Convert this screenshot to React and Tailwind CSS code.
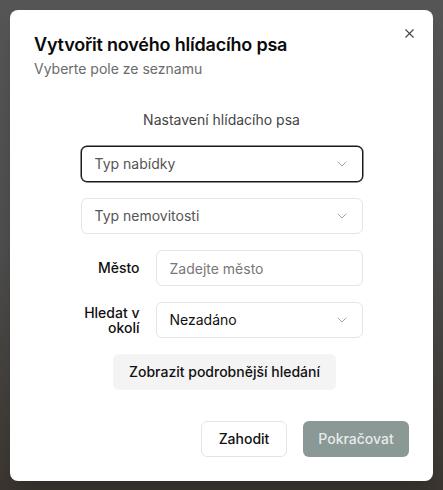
import { ChevronDown, X } from 'lucide-react';

function Select({ label, value, focused }) {
  return (
    <button
      type="button"
      className={`flex h-9 w-full items-center justify-between rounded-md border bg-white pl-[13px] pr-3 text-sm ${
        focused ? 'border-[#1a1a1a] shadow-[0_0_0_0.5px_#1a1a1a]' : 'border-[#e4e4e7]'
      }`}
    >
      <span className={value ? 'text-[#111]' : 'text-[#555]'}>{value || label}</span>
      <ChevronDown size={16} strokeWidth={1.5} className="text-[#a1a1aa]" />
    </button>
  );
}

export default function App() {
  return (
    <div
      className="flex h-[490px] w-[443px] items-start justify-center bg-gradient-to-b from-[#555] via-[#4d4d4d] to-[#3a352f] pt-[10px]"
      style={{ fontFamily: 'Inter, "Noto Sans", sans-serif' }}
    >
      <div className="relative flex h-[471px] w-[423px] flex-col rounded-lg bg-white px-6 pt-[21px] pb-6 shadow-xl">
        <button type="button" className="absolute right-[16px] top-[16px] text-[#444]">
          <X size={15} strokeWidth={1.75} />
        </button>

        {/* Header */}
        <h2 className="text-lg font-semibold leading-7 tracking-[-0.2px] text-[#0a0a0a]">
          Vytvořit nového hlídacího psa
        </h2>
        <p className="text-sm leading-5 text-[#6b6b6b]">Vyberte pole ze seznamu</p>

        {/* Form */}
        <div className="mx-auto mt-[31px] flex w-[282px] flex-col">
          <p className="text-center text-sm leading-5 text-[#444]">Nastavení hlídacího psa</p>

          <div className="mt-[16px] flex flex-col gap-4">
            <Select label="Typ nabídky" focused />
            <Select label="Typ nemovitosti" />

            <div className="flex items-center gap-4">
              <label className="w-[59px] shrink-0 text-right text-sm font-medium leading-4 text-[#111]">Město</label>
              <input
                placeholder="Zadejte město"
                className="h-9 w-full min-w-0 flex-1 rounded-md border border-[#e4e4e7] px-[13px] text-sm text-[#111] outline-none placeholder:text-[#777]"
              />
            </div>

            <div className="flex items-center gap-4">
              <label className="w-[59px] shrink-0 text-right text-sm font-medium leading-[15px] text-[#111]">
                Hledat v okolí
              </label>
              <div className="min-w-0 flex-1">
                <Select value="Nezadáno" />
              </div>
            </div>
          </div>

          <button
            type="button"
            className="mx-auto mt-4 h-9 translate-x-[3px] rounded-md bg-[#f4f4f5] px-4 text-sm font-medium text-[#111]"
          >
            Zobrazit podrobnější hledání
          </button>
        </div>

        {/* Footer */}
        <div className="mt-auto flex justify-end gap-4">
          <button
            type="button"
            className="h-9 w-[86px] rounded-md border border-[#e4e4e7] bg-white text-sm font-medium text-[#111]"
          >
            Zahodit
          </button>
          <button
            type="button"
            className="h-9 w-[106px] rounded-md bg-[#8a9996] text-sm font-medium text-[#e6ebea]"
          >
            Pokračovat
          </button>
        </div>
      </div>
    </div>
  );
}
